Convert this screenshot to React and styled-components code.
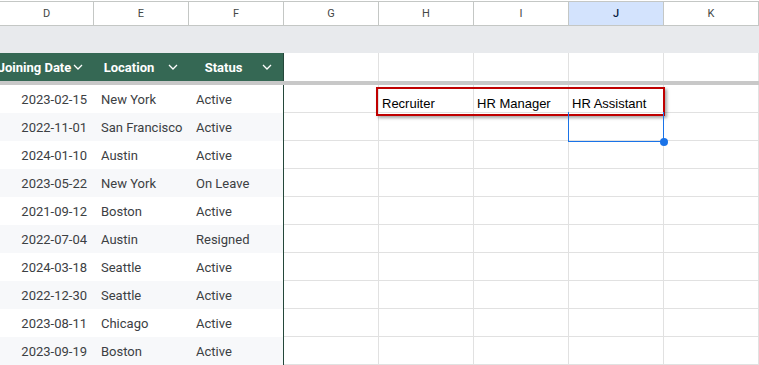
import React from 'react';
import styled, { createGlobalStyle } from 'styled-components';

const GlobalStyle = createGlobalStyle`
  html, body {
    margin: 0;
    padding: 0;
    background: #fff;
  }
  body {
    font-family: Roboto, "Liberation Sans", Arial, sans-serif;
    overflow: hidden;
  }
  * { box-sizing: border-box; }
`;

const GRID = '#e1e1e1';
const HEAD_LINE = '#c4c7c5';
const GREEN = '#356854';
const GREEN_EDGE = '#24473a';

const Sheet = styled.div`
  position: relative;
  width: 759px;
  height: 365px;
  overflow: hidden;
  background: #fff;
`;

const Row = styled.div`
  display: grid;
  grid-template-columns: 94px repeat(7, 95px);
  height: ${(p) => p.h}px;
`;

const ColumnBar = styled(Row)`
  margin-top: 1px;
  border-top: 1px solid ${HEAD_LINE};
  border-bottom: 1px solid ${HEAD_LINE};
`;

const ColumnLetter = styled.div`
  display: flex;
  align-items: center;
  justify-content: center;
  border-right: 1px solid ${HEAD_LINE};
  font-size: 11px;
  color: ${(p) => (p.active ? '#0b1f44' : '#444746')};
  background: ${(p) => (p.active ? '#d3e3fd' : '#fff')};
  font-weight: ${(p) => (p.active ? 500 : 400)};
`;

const Band = styled.div`
  height: 27px;
  background: #e8eaed;
`;

const FreezeBar = styled.div`
  height: 4px;
  background: #c8c8c8;
`;

const TableHead = styled.div`
  display: flex;
  align-items: center;
  gap: 4px;
  padding-right: 11px;
  background: ${GREEN};
  color: #fff;
  font-weight: 700;
  font-size: 13px;
  overflow: hidden;
  border-right: ${(p) => (p.last ? `1px solid ${GREEN_EDGE}` : 'none')};
`;

const HeadLabel = styled.div`
  flex: 1;
  min-width: 0;
  display: flex;
  justify-content: center;
  white-space: nowrap;
`;

const Chevron = styled.svg`
  flex: none;
  width: 10px;
  height: 6px;
`;

const DataCell = styled.div`
  display: flex;
  align-items: center;
  justify-content: ${(p) => (p.right ? 'flex-end' : 'flex-start')};
  padding: 0 7px;
  font-size: 13px;
  color: #3c4043;
  white-space: nowrap;
  background: ${(p) => (p.striped ? '#f7f8fa' : '#fff')};
  border-right: ${(p) => (p.last ? `1px solid ${GREEN_EDGE}` : 'none')};
`;

const GridCell = styled.div`
  display: flex;
  align-items: flex-end;
  padding: 0 3px 0;
  border-right: 1px solid ${GRID};
  border-bottom: ${(p) => (p.noBottom ? 'none' : `1px solid ${GRID}`)};
  font-family: "Liberation Sans", Arial, sans-serif;
  font-size: 13px;
  line-height: 17px;
  color: #000;
  white-space: nowrap;
`;

const Highlight = styled.div`
  position: absolute;
  left: 376px;
  top: 87px;
  width: 289px;
  height: 29px;
  border: 2px solid #c00000;
  box-shadow: 2px 2px 3px rgba(0, 0, 0, 0.35);
  pointer-events: none;
`;

const Selection = styled.div`
  position: absolute;
  left: 568px;
  top: 112px;
  width: 96px;
  height: 30px;
  border: 1px solid #1a73e8;
  border-top: none;
`;

const FillHandle = styled.div`
  position: absolute;
  right: -5px;
  bottom: -5px;
  width: 8px;
  height: 8px;
  border-radius: 50%;
  background: #1a73e8;
`;

const columns = ['D', 'E', 'F', 'G', 'H', 'I', 'J', 'K'];

const heads = ['Joining Date', 'Location', 'Status'];

const rows = [
  ['2023-02-15', 'New York', 'Active'],
  ['2022-11-01', 'San Francisco', 'Active'],
  ['2024-01-10', 'Austin', 'Active'],
  ['2023-05-22', 'New York', 'On Leave'],
  ['2021-09-12', 'Boston', 'Active'],
  ['2022-07-04', 'Austin', 'Resigned'],
  ['2024-03-18', 'Seattle', 'Active'],
  ['2022-12-30', 'Seattle', 'Active'],
  ['2023-08-11', 'Chicago', 'Active'],
  ['2023-09-19', 'Boston', 'Active'],
];

const roles = ['', 'Recruiter', 'HR Manager', 'HR Assistant', ''];

const ChevronIcon = () => (
  <Chevron viewBox="0 0 10 6">
    <path d="M1 1l4 4 4-4" fill="none" stroke="#fff" strokeWidth="1.3" />
  </Chevron>
);

export default function App() {
  return (
    <Sheet>
      <GlobalStyle />
      <ColumnBar h={25}>
        {columns.map((c) => (
          <ColumnLetter key={c} active={c === 'J'}>{c}</ColumnLetter>
        ))}
      </ColumnBar>
      <Band />
      <Row h={28}>
        {heads.map((h, i) => (
          <TableHead key={h} last={i === 2}>
            <HeadLabel><span>{h}</span></HeadLabel>
            <ChevronIcon />
          </TableHead>
        ))}
        {[0, 1, 2, 3, 4].map((i) => (
          <GridCell key={i} noBottom />
        ))}
      </Row>
      <FreezeBar />
      {rows.map((r, ri) => (
        <Row h={28} key={ri}>
          <DataCell right striped={ri % 2 === 1}>{r[0]}</DataCell>
          <DataCell striped={ri % 2 === 1}>{r[1]}</DataCell>
          <DataCell striped={ri % 2 === 1} last>{r[2]}</DataCell>
          {roles.map((t, ci) => (
            <GridCell key={ci}>{ri === 0 ? t : ''}</GridCell>
          ))}
        </Row>
      ))}
      <Highlight />
      <Selection>
        <FillHandle />
      </Selection>
    </Sheet>
  );
}
